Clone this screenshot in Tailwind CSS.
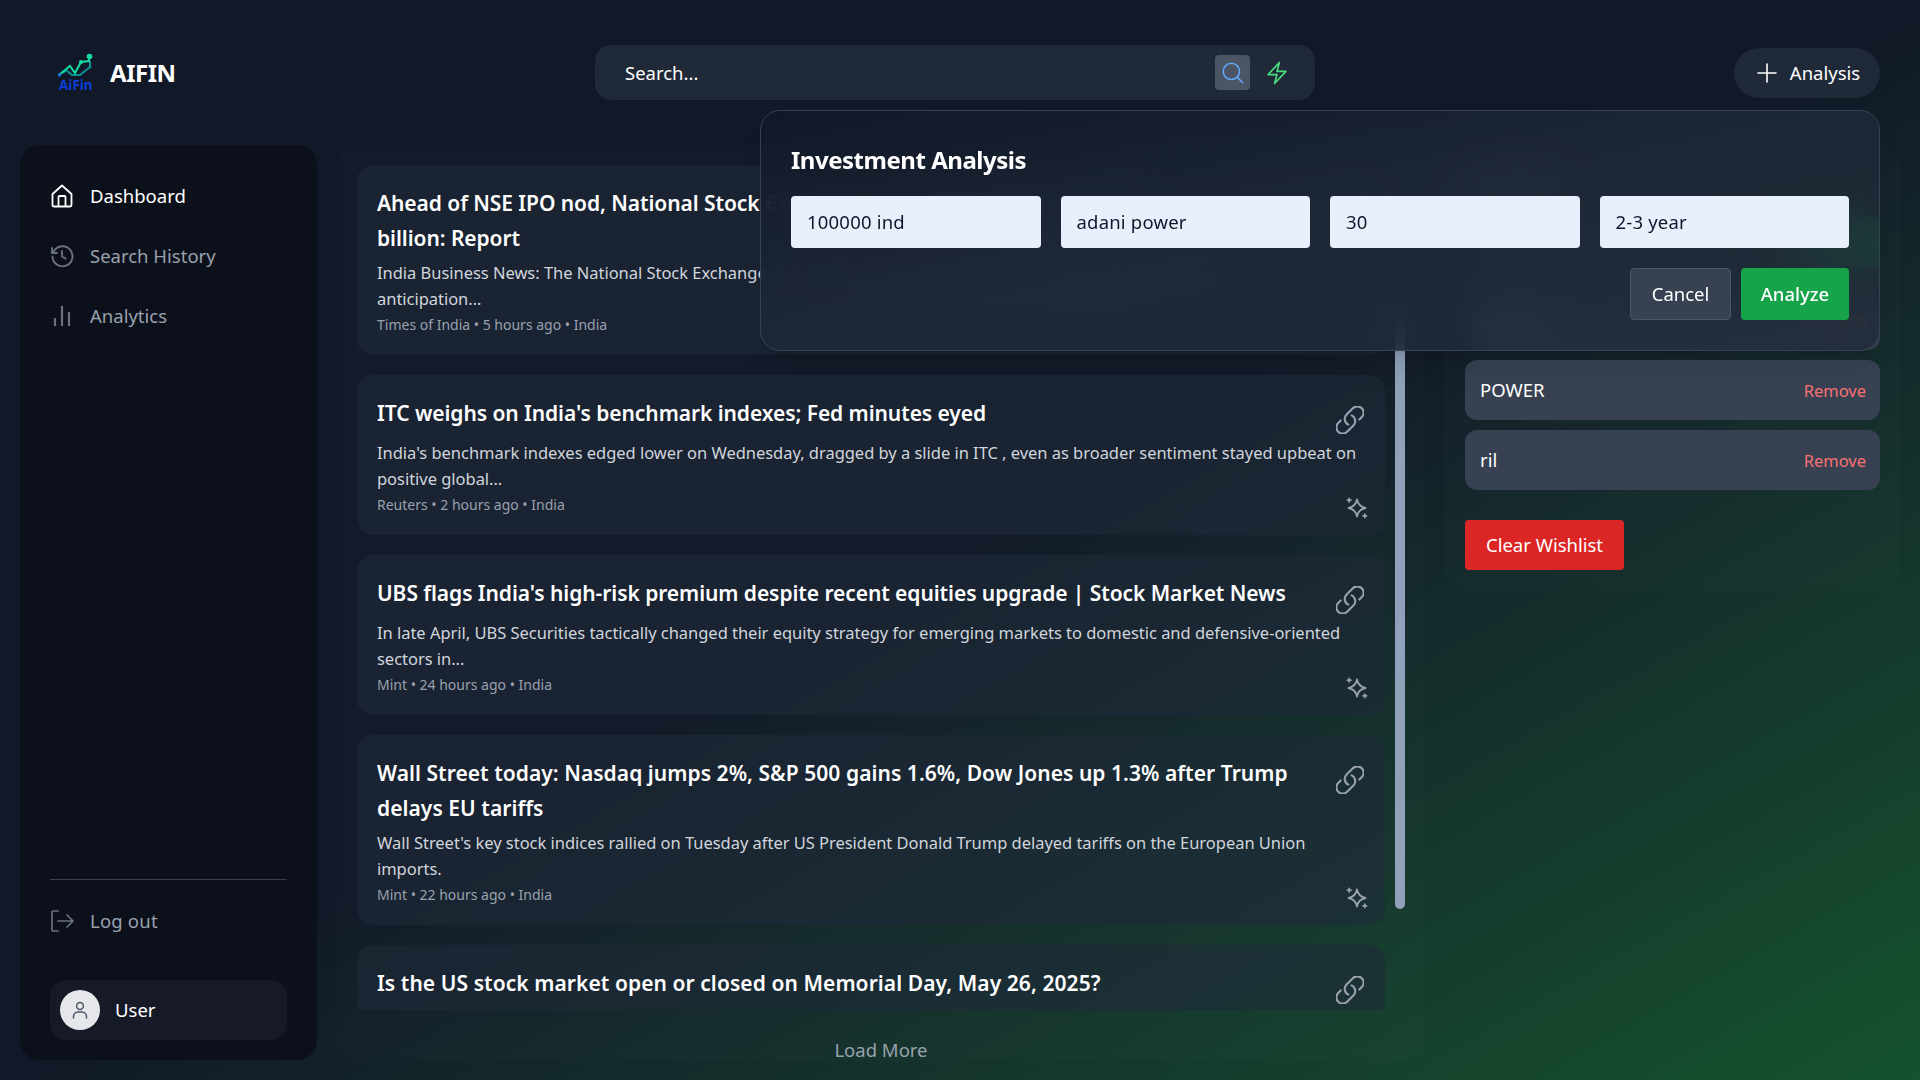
<!DOCTYPE html>
<html lang="en">
<head>
  <meta charset="UTF-8" />
  <title>AIFIN</title>
  <script src="https://cdn.jsdelivr.net/npm/@tailwindcss/browser@4"></script>
</head>
<body class="h-[1080px] overflow-hidden bg-linear-to-br from-[#111827] via-[#111827] to-[#14532d] font-['Noto_Sans',sans-serif] text-white">
  <div class="relative h-full">
    <!-- Header -->
    <header class="flex h-[145px] items-start px-[40px]">
      <div class="mt-[54px] flex w-[555px] items-center">
        <svg class="ml-[18px] h-[38px] w-[36px] shrink-0 overflow-visible" viewBox="0 0 36 38" fill="none">
          <path d="M5 19 8 16 14 21 22 21 32 13 32 7" stroke="#0e8f8f" stroke-width="2"/>
          <path d="M1 21 12 12 17 19 23 8 31 7 31 2" stroke="#14dca0" stroke-width="2"/>
          <circle cx="1.500" cy="21" r="1.800" fill="#1a6fe0"/><circle cx="23" cy="8" r="2" fill="#14dca0"/><circle cx="31.500" cy="2.500" r="2.800" fill="#14dca0"/><circle cx="32" cy="13" r="1.600" fill="#0e8f8f"/>
          <text x="1" y="35.500" font-size="13.500" font-weight="700" fill="#0b3fd6" font-family="Noto Sans">AiFin</text>
        </svg>
        <span class="ml-[16px] text-2xl font-bold leading-none tracking-[-0.02em]">AIFIN</span>
      </div>
      <div class="mt-[45px] flex h-[55px] w-[720px] items-center rounded-2xl bg-[#1f2937] pr-[25px] pl-[30px]">
        <span class="flex-1 text-[18.5px]">Search...</span>
        <span class="flex h-[35px] w-[35px] items-center justify-center rounded bg-[#4b5563]">
          <svg class="h-[26px] w-[26px] text-[#60a5fa]" viewBox="0 0 24 24" fill="none" stroke="currentColor" stroke-width="1.500"><path stroke-linecap="round" d="M21 21l-4.500-4.500M18 10.500a7.500 7.500 0 1 1-15 0 7.500 7.500 0 0 1 15 0Z"/></svg>
        </span>
        <svg class="ml-[14px] h-[26px] w-[26px] text-[#4ade80]" viewBox="0 0 24 24" fill="none" stroke="currentColor" stroke-width="1.500" stroke-linejoin="round" stroke-linecap="round"><path d="M3.750 13.500l10.500-11.250L12 10.500h8.250L9.750 21.750 12 13.500H3.750Z"/></svg>
      </div>
      <button class="mt-[48px] ml-auto flex h-[50px] w-[146px] items-center justify-center gap-[11px] rounded-full bg-[#1f2937] pl-px text-[18.5px]">
        <svg class="h-[24px] w-[24px]" viewBox="0 0 24 24" fill="none" stroke="currentColor" stroke-width="1.600" stroke-linecap="round"><path d="M12 3v18M3 12h18"/></svg>
        <span>Analysis</span>
      </button>
    </header>

    <div class="flex items-start pl-[20px]">
      <!-- Sidebar -->
      <aside class="flex h-[915px] w-[297px] shrink-0 flex-col rounded-[20px] bg-[#0c101a] px-[30px] pb-[20px] pt-[35px]">
        <nav class="flex flex-col gap-[28px] text-[18.5px] leading-[32px]">
          <a class="flex h-[32px] items-center gap-[16px] text-white">
            <svg class="h-[24px] w-[24px] shrink-0" viewBox="0 0 24 24" fill="none" stroke="currentColor" stroke-width="1.800" stroke-linejoin="round"><path d="M2.500 10 12 1.500 21.500 10v11a1.500 1.500 0 0 1-1.500 1.500H4A1.500 1.500 0 0 1 2.500 21V10Z"/><path d="M8.500 22.500V13a1 1 0 0 1 1-1h5a1 1 0 0 1 1 1v9.500"/></svg>
            Dashboard
          </a>
          <a class="flex h-[32px] items-center gap-[16px] text-gray-400">
            <svg class="h-[24px] w-[24px] shrink-0 text-gray-500" viewBox="0 0 24 24" fill="none" stroke="currentColor" stroke-width="1.900" stroke-linecap="round" stroke-linejoin="round"><path d="M2 4v5h5"/><path d="M2.500 12.500A10 10 0 1 0 4 7L2.500 8.500"/><path d="M12 7v5.500l3.500 2"/></svg>
            Search History
          </a>
          <a class="flex h-[32px] items-center gap-[16px] text-gray-400">
            <svg class="h-[24px] w-[24px] shrink-0 text-gray-500" viewBox="0 0 24 24" fill="none" stroke="currentColor" stroke-width="2.200"><path d="M5 14v8M12 2v20M19 8v14"/></svg>
            Analytics
          </a>
        </nav>
        <div class="mt-auto border-t border-gray-700 pt-[25px]">
          <a class="flex h-[32px] items-center gap-[16px] text-[18.5px] tracking-[0.2px] text-gray-400">
            <svg class="h-[24px] w-[24px] shrink-0 text-gray-500" viewBox="0 0 24 24" fill="none" stroke="currentColor" stroke-width="1.700" stroke-linecap="round" stroke-linejoin="round"><path d="M8 2H3a1 1 0 0 0-1 1v18a1 1 0 0 0 1 1h5"/><path d="M8 12h15M17 6l6 6-6 6"/></svg>
            Log out
          </a>
          <div class="mt-[43px] flex h-[60px] items-center gap-[15px] rounded-2xl bg-[#151a26] pl-[10px]">
            <span class="flex h-[40px] w-[40px] items-center justify-center rounded-full bg-gray-200">
              <svg class="h-[24px] w-[24px] text-gray-600" viewBox="0 0 24 24" fill="none" stroke="currentColor" stroke-width="1.500" stroke-linecap="round"><circle cx="12" cy="8" r="3.400"/><path d="M5.500 20v-1.500a4.500 4.500 0 0 1 4.500-4.500h4a4.500 4.500 0 0 1 4.500 4.500V20"/></svg>
            </span>
            <span class="text-[18.5px]">User</span>
          </div>
        </div>
      </aside>

      <!-- News -->
      <main class="relative ml-[20px] flex h-[915px] w-[1087px] shrink-0 flex-col rounded-[20px] bg-white/[0.01] px-[20px] pt-[20px]">
        <div class="flex h-[845px] w-[1028px] shrink-0 flex-col gap-[20px] overflow-hidden">
          <article class="rounded-2xl bg-gray-800/60 p-[20px]">
            <div class="flex justify-between">
              <h2 class="translate-y-px text-[21px] font-semibold leading-[35px] tracking-[-0.07px]">Ahead of NSE IPO nod, National Stock Exchange's market value crosses $60<br>billion: Report</h2>
              <svg class="mt-[11px] mr-px mb-px h-[28px] w-[28px] shrink-0 text-gray-400" viewBox="2 2 20 20" fill="none" stroke="currentColor" stroke-width="1.500" stroke-linecap="round" stroke-linejoin="round"><path d="M13.190 8.688a4.500 4.500 0 0 1 1.242 7.244l-4.500 4.500a4.500 4.500 0 0 1-6.364-6.364l1.757-1.757m13.350-.622 1.757-1.757a4.500 4.500 0 0 0-6.364-6.364l-4.500 4.500a4.500 4.500 0 0 0 1.242 7.244"/></svg>
            </div>
            <p class="mt-[5px] whitespace-nowrap text-[16.5px] leading-[26px] tracking-[-0.03px] text-gray-300">India Business News: The National Stock Exchange of India has crossed a new valuation high amid investor<br>anticipation...</p>
            <div class="mt-[3px] h-[20px] text-sm leading-[20px] text-gray-400">Times of India • 5 hours ago • India</div>
          </article>

          <article class="rounded-2xl bg-gray-800/60 p-[20px]">
            <div class="flex justify-between">
              <h2 class="translate-y-px text-[21px] font-semibold leading-[35px] tracking-[-0.07px]">ITC weighs on India's benchmark indexes; Fed minutes eyed</h2>
              <svg class="mt-[11px] mr-px mb-px h-[28px] w-[28px] shrink-0 text-gray-400" viewBox="2 2 20 20" fill="none" stroke="currentColor" stroke-width="1.500" stroke-linecap="round" stroke-linejoin="round"><path d="M13.190 8.688a4.500 4.500 0 0 1 1.242 7.244l-4.500 4.500a4.500 4.500 0 0 1-6.364-6.364l1.757-1.757m13.350-.622 1.757-1.757a4.500 4.500 0 0 0-6.364-6.364l-4.500 4.500a4.500 4.500 0 0 0 1.242 7.244"/></svg>
            </div>
            <p class="mt-[5px] whitespace-nowrap text-[16.5px] leading-[26px] tracking-[-0.03px] text-gray-300">India's benchmark indexes edged lower on Wednesday, dragged by a slide in ITC , even as broader sentiment stayed upbeat on<br>positive global...</p>
            <div class="mt-[3px] flex h-[20px] items-start justify-between">
              <span class="text-sm leading-[20px] text-gray-400">Reuters • 2 hours ago • India</span>
              <svg class="mt-[2px] -mr-[3px] h-[22px] w-[22px] shrink-0 text-gray-400" viewBox="0 0 22 22" fill="none" stroke="currentColor" stroke-width="1.800" stroke-linejoin="round" stroke-linecap="round"><path d="M11 2.500c.9 4.900 3.100 7.400 8.500 8.500-5.400 1.100-7.600 3.600-8.500 8.500-.9-4.900-3.100-7.400-8.500-8.500 5.400-1.100 7.600-3.600 8.500-8.500Z"/><path d="M3.200 1.400v3.600M1.400 3.200h3.600M18.800 17v3.600M17 18.800h3.600" stroke-width="1.700"/></svg>
            </div>
          </article>

          <article class="rounded-2xl bg-gray-800/60 p-[20px]">
            <div class="flex justify-between">
              <h2 class="translate-y-px text-[21px] font-semibold leading-[35px] tracking-[-0.07px]">UBS flags India's high-risk premium despite recent equities upgrade | Stock Market News</h2>
              <svg class="mt-[11px] mr-px mb-px h-[28px] w-[28px] shrink-0 text-gray-400" viewBox="2 2 20 20" fill="none" stroke="currentColor" stroke-width="1.500" stroke-linecap="round" stroke-linejoin="round"><path d="M13.190 8.688a4.500 4.500 0 0 1 1.242 7.244l-4.500 4.500a4.500 4.500 0 0 1-6.364-6.364l1.757-1.757m13.350-.622 1.757-1.757a4.500 4.500 0 0 0-6.364-6.364l-4.500 4.500a4.500 4.500 0 0 0 1.242 7.244"/></svg>
            </div>
            <p class="mt-[5px] whitespace-nowrap text-[16.5px] leading-[26px] tracking-[-0.03px] text-gray-300">In late April, UBS Securities tactically changed their equity strategy for emerging markets to domestic and defensive-oriented<br>sectors in...</p>
            <div class="mt-[3px] flex h-[20px] items-start justify-between">
              <span class="text-sm leading-[20px] text-gray-400">Mint • 24 hours ago • India</span>
              <svg class="mt-[2px] -mr-[3px] h-[22px] w-[22px] shrink-0 text-gray-400" viewBox="0 0 22 22" fill="none" stroke="currentColor" stroke-width="1.800" stroke-linejoin="round" stroke-linecap="round"><path d="M11 2.500c.9 4.900 3.100 7.400 8.500 8.500-5.400 1.100-7.600 3.600-8.500 8.500-.9-4.900-3.100-7.400-8.500-8.500 5.400-1.100 7.600-3.600 8.500-8.500Z"/><path d="M3.200 1.400v3.600M1.400 3.200h3.600M18.800 17v3.600M17 18.800h3.600" stroke-width="1.700"/></svg>
            </div>
          </article>

          <article class="rounded-2xl bg-gray-800/60 p-[20px]">
            <div class="flex justify-between">
              <h2 class="translate-y-px text-[21px] font-semibold leading-[35px] tracking-[0.05px]">Wall Street today: Nasdaq jumps 2%, S&amp;P 500 gains 1.6%, Dow Jones up 1.3% after Trump<br>delays EU tariffs</h2>
              <svg class="mt-[11px] mr-px mb-px h-[28px] w-[28px] shrink-0 text-gray-400" viewBox="2 2 20 20" fill="none" stroke="currentColor" stroke-width="1.500" stroke-linecap="round" stroke-linejoin="round"><path d="M13.190 8.688a4.500 4.500 0 0 1 1.242 7.244l-4.500 4.500a4.500 4.500 0 0 1-6.364-6.364l1.757-1.757m13.350-.622 1.757-1.757a4.500 4.500 0 0 0-6.364-6.364l-4.500 4.500a4.500 4.500 0 0 0 1.242 7.244"/></svg>
            </div>
            <p class="mt-[5px] whitespace-nowrap text-[16.5px] leading-[26px] tracking-[-0.03px] text-gray-300">Wall Street's key stock indices rallied on Tuesday after US President Donald Trump delayed tariffs on the European Union<br>imports.</p>
            <div class="mt-[3px] flex h-[20px] items-start justify-between">
              <span class="text-sm leading-[20px] text-gray-400">Mint • 22 hours ago • India</span>
              <svg class="mt-[2px] -mr-[3px] h-[22px] w-[22px] shrink-0 text-gray-400" viewBox="0 0 22 22" fill="none" stroke="currentColor" stroke-width="1.800" stroke-linejoin="round" stroke-linecap="round"><path d="M11 2.500c.9 4.900 3.100 7.400 8.500 8.500-5.400 1.100-7.600 3.600-8.500 8.500-.9-4.900-3.100-7.400-8.500-8.500 5.400-1.100 7.600-3.600 8.500-8.500Z"/><path d="M3.200 1.400v3.600M1.400 3.200h3.600M18.800 17v3.600M17 18.800h3.600" stroke-width="1.700"/></svg>
            </div>
          </article>

          <article class="h-[160px] shrink-0 rounded-2xl bg-gray-800/60 p-[20px]">
            <div class="flex justify-between">
              <h2 class="translate-y-px text-[21px] font-semibold leading-[35px] tracking-[0.07px]">Is the US stock market open or closed on Memorial Day, May 26, 2025?</h2>
              <svg class="mt-[11px] mr-px mb-px h-[28px] w-[28px] shrink-0 text-gray-400" viewBox="2 2 20 20" fill="none" stroke="currentColor" stroke-width="1.500" stroke-linecap="round" stroke-linejoin="round"><path d="M13.190 8.688a4.500 4.500 0 0 1 1.242 7.244l-4.500 4.500a4.500 4.500 0 0 1-6.364-6.364l1.757-1.757m13.350-.622 1.757-1.757a4.500 4.500 0 0 0-6.364-6.364l-4.500 4.500a4.500 4.500 0 0 0 1.242 7.244"/></svg>
            </div>
          </article>
        </div>
        <div class="mt-[26px] w-[1048px] text-center text-[18.5px] text-gray-400">Load More</div>
        <!-- scrollbar thumb -->
        <div class="absolute left-[1058px] top-[160px] h-[604px] w-[10px] rounded-full bg-slate-400"></div>
      </main>

      <!-- Wishlist -->
      <section class="ml-[21px] h-[445px] w-[455px] shrink-0 rounded-[20px] bg-white/[0.01] p-[20px]">
        <h3 class="text-2xl font-semibold leading-[32px]">Wishlist</h3>
        <div class="mt-[20px] flex h-[50px] gap-[10px]">
          <div class="flex-1 rounded bg-[#374151]/60"></div>
          <div class="w-[90px] rounded bg-[#16a34a]"></div>
        </div>
        <div class="mt-[23px] flex flex-col gap-[10px]">
          <div class="flex h-[60px] items-center justify-between rounded-xl bg-[#374151] pr-[14px] pl-[15px]"><span class="text-[18.5px]">ADANI</span><span class="mt-[2px] text-[16.5px] text-[#f87171]">Remove</span></div>
          <div class="flex h-[60px] items-center justify-between rounded-xl bg-[#374151] pr-[14px] pl-[15px]"><span class="text-[18.5px]">POWER</span><span class="mt-[2px] text-[16.5px] text-[#f87171]">Remove</span></div>
          <div class="flex h-[60px] items-center justify-between rounded-xl bg-[#374151] pr-[14px] pl-[15px]"><span class="text-[18.5px]">ril</span><span class="mt-[2px] text-[16.5px] text-[#f87171]">Remove</span></div>
        </div>
        <button class="mt-[30px] h-[50px] w-[159px] rounded bg-[#dc2626] text-[18.5px]">Clear Wishlist</button>
      </section>
    </div>

    <!-- Investment Analysis modal -->
    <div class="absolute left-[760px] top-[110px] h-[241px] w-[1120px] rounded-[20px] border border-gray-700 bg-linear-to-br from-[#111827]/95 via-[#1f2937]/90 to-[#1f2937]/80 p-[30px] shadow-xl backdrop-blur-xl">
      <h3 class="pt-[3px] text-2xl font-bold leading-[32px] tracking-[-0.02em]">Investment Analysis</h3>
      <div class="mt-[20px] grid grid-cols-4 gap-[20px]">
        <div class="flex h-[52px] items-center rounded bg-[#e8f0fe] px-[16px] text-[18.5px] tracking-[0.2px] text-gray-900">100000 ind</div>
        <div class="flex h-[52px] items-center rounded bg-[#e8f0fe] px-[16px] text-[18.5px] tracking-[0.2px] text-gray-900">adani power</div>
        <div class="flex h-[52px] items-center rounded bg-[#e8f0fe] px-[16px] text-[18.5px] tracking-[0.2px] text-gray-900">30</div>
        <div class="flex h-[52px] items-center rounded bg-[#e8f0fe] px-[16px] text-[18.5px] tracking-[0.2px] text-gray-900">2-3 year</div>
      </div>
      <div class="mt-[20px] flex justify-end gap-[10px]">
        <button class="h-[52px] w-[101px] rounded border border-gray-600 bg-[#374151] text-[18.5px]">Cancel</button>
        <button class="h-[52px] w-[108px] rounded bg-[#16a34a] text-[18.5px] font-medium">Analyze</button>
      </div>
    </div>
  </div>
</body>
</html>
